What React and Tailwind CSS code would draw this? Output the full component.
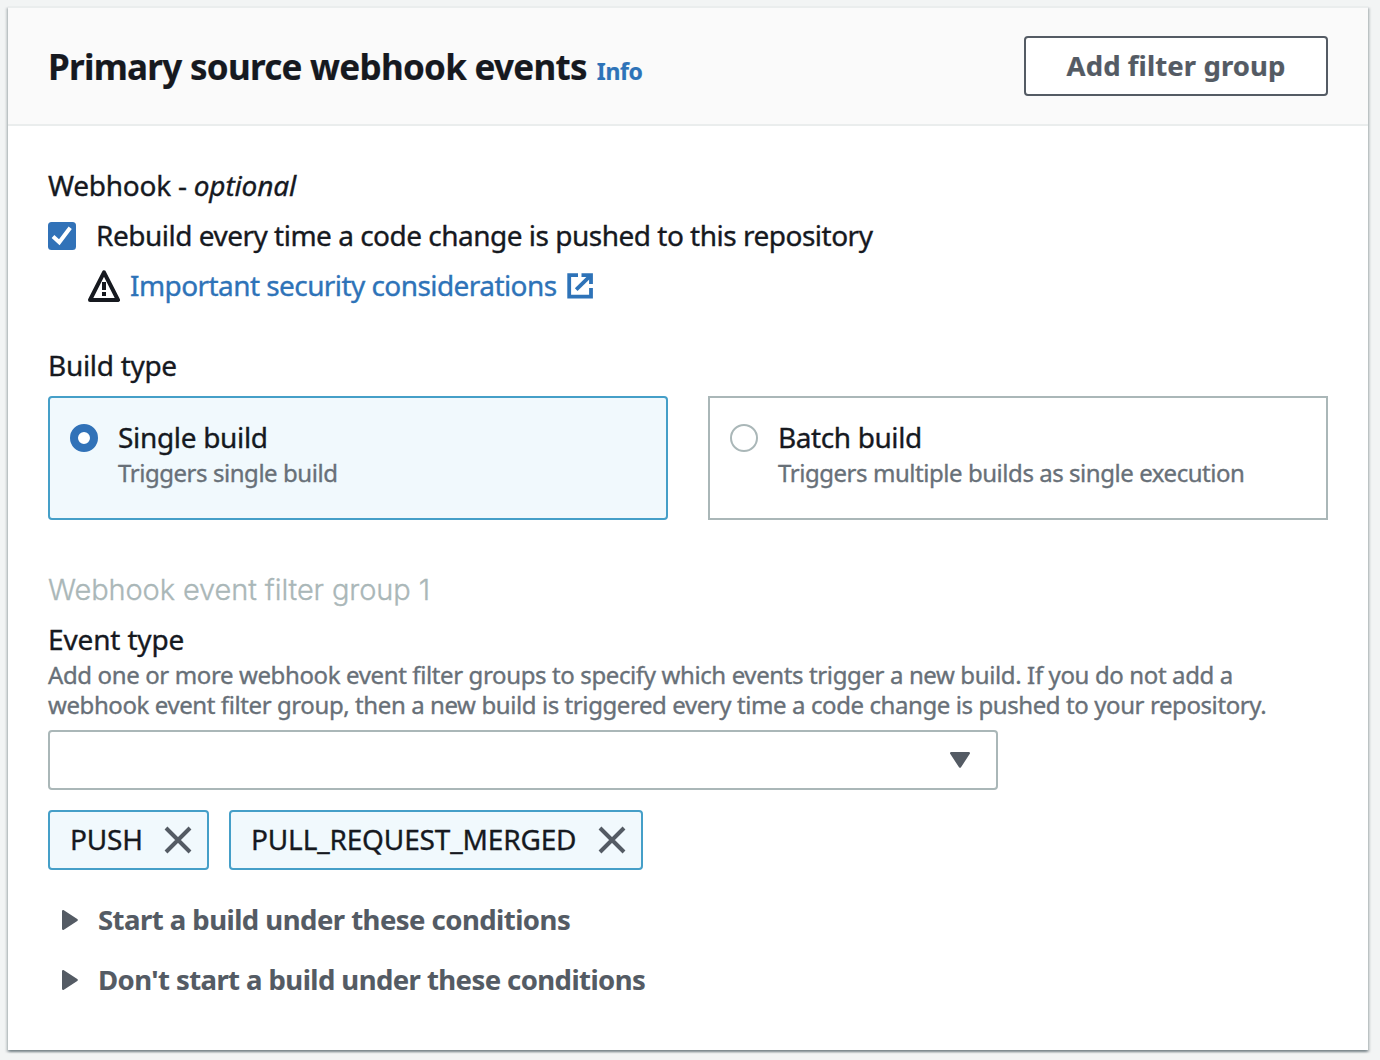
function Checkbox() {
  return (
    <svg className="size-7 shrink-0" viewBox="0 0 28 28">
      <rect width="28" height="28" rx="3.5" fill="#3172b8" />
      <path d="M5 14.5 L11.3 20.3 L22.2 5.8" fill="none" stroke="#fff" strokeWidth="4" />
    </svg>
  );
}

function WarningIcon() {
  return (
    <svg className="h-8 w-8 shrink-0" viewBox="0 0 32 32" fill="none" stroke="#16191f">
      <path d="M16 2.4 L30 30 H2 Z" strokeWidth="4" strokeLinejoin="round" />
      <path d="M16 12 V20 M16 22 V26" strokeWidth="4" />
    </svg>
  );
}

function ExternalIcon() {
  return (
    <svg className="h-[26px] w-[26px] shrink-0" viewBox="0 0 26 26" fill="none" stroke="#2e73b8" strokeWidth="3.8">
      <path d="M11 2.2 H2.2 V23.6 H24 V15" />
      <path d="M14.5 2.2 H24 V11" />
      <path d="M23.5 2.7 L9.2 16.6" />
    </svg>
  );
}

function CloseIcon() {
  return (
    <svg className="size-7 shrink-0" viewBox="0 0 28 28" fill="none" stroke="#545b64" strokeWidth="4">
      <path d="M2 2 L26 26 M26 2 L2 26" />
    </svg>
  );
}

function CaretDown() {
  return (
    <svg className="h-4 w-5" viewBox="0 0 20 16">
      <path d="M1.2 1.2 H18.8 L10 14.6 Z" fill="#545b64" stroke="#545b64" strokeWidth="2.4" strokeLinejoin="round" />
    </svg>
  );
}

function CaretRight() {
  return (
    <svg className="h-5 w-4" viewBox="0 0 16 20">
      <path d="M1.2 1.2 V18.8 L14.6 10 Z" fill="#545b64" stroke="#545b64" strokeWidth="2.4" strokeLinejoin="round" />
    </svg>
  );
}

function Radio({ checked }) {
  return checked ? (
    <span className="size-7 shrink-0 rounded-full border-8 border-[#3172b8] bg-white" />
  ) : (
    <span className="size-7 shrink-0 rounded-full border-2 border-[#aab7b8] bg-white" />
  );
}

function Tile({ checked, title, titleClass, description }) {
  return (
    <div
      className={
        checked
          ? "flex h-[124px] gap-5 rounded border-2 border-[#459fc8] bg-[#f1f9fd] px-5 pt-[19px]"
          : "flex h-[124px] gap-5 border-2 border-[#aab7b8] bg-white px-5 pt-[19px]"
      }
    >
      <div className="flex h-10 items-center pt-0.5">
        <Radio checked={checked} />
      </div>
      <div>
        <div className={titleClass}>{title}</div>
        <div className="mt-px text-[24px] leading-[30px] tracking-[-0.45px] whitespace-nowrap text-[#687078]">
          {description}
        </div>
      </div>
    </div>
  );
}

function Token({ children, className }) {
  return (
    <div
      className={`flex h-[60px] items-center justify-between rounded border-2 border-[#459fc8] bg-[#f1f9fd] pr-[15px] pl-5 ${className}`}
    >
      <span className="pb-[3px]">{children}</span>
      <CloseIcon />
    </div>
  );
}

function Expander({ children, className }) {
  return (
    <div className="flex h-10 items-center gap-5 pl-[14px]">
      <CaretRight />
      <span className={`text-[27.5px] leading-10 font-bold whitespace-nowrap text-[#545b64] ${className}`}>{children}</span>
    </div>
  );
}

export default function App() {
  return (
    <div className="h-[1060px] w-[1380px] overflow-hidden bg-[#f2f4f4] px-2 pt-1.5 pr-3 font-['Noto_Sans',sans-serif] text-[28px] leading-10 text-[#16191f] [-webkit-text-stroke:0.35px]">
      <div className="h-[1044px] border-t-2 border-[#eaeded] bg-white shadow-[0_2px_2px_0_rgba(0,28,36,0.3),2px_2px_2px_0_rgba(0,28,36,0.15),-2px_2px_2px_0_rgba(0,28,36,0.15)]">
        <header className="flex h-[118px] items-start justify-between border-b-2 border-[#eaeded] bg-[#fafafa] px-10 pt-7 [-webkit-text-stroke:0.2px]">
          <h2 className="flex items-baseline gap-[10px] pt-[9px] leading-[44px] font-bold whitespace-nowrap">
            <span className="text-[35px] tracking-[-0.72px]">Primary source webhook events</span>
            <a className="text-[23px] tracking-[-0.4px] text-[#2e73b8]">Info</a>
          </h2>
          <button className="flex h-[60px] w-[304px] items-center justify-center rounded border-2 border-[#545b64] bg-white text-[27.5px] font-bold tracking-[0.1px] text-[#545b64]">
            Add filter group
          </button>
        </header>

        <main className="px-10 pt-[39px]">
          <div className="whitespace-pre">
            <span className="tracking-[-0.25px]">Webhook - </span>
            <em className="tracking-[-0.15px]">optional</em>
          </div>
          <label className="mt-2.5 flex h-10 items-center gap-5">
            <span className="pt-0.5">
              <Checkbox />
            </span>
            <span className="tracking-[-0.5px] whitespace-nowrap">
              Rebuild every time a code change is pushed to this repository
            </span>
          </label>
          <div className="mt-2.5 flex h-10 items-center pl-10">
            <span className="pt-0.5">
              <WarningIcon />
            </span>
            <a className="ml-[10px] tracking-[-0.57px] whitespace-nowrap text-[#2e73b8]">Important security considerations</a>
            <span className="ml-[10px] pt-0.5">
              <ExternalIcon />
            </span>
          </div>

          <div className="mt-10 tracking-[-0.3px]">Build type</div>
          <div className="mt-[11px] grid grid-cols-2 gap-10">
            <Tile checked title="Single build" titleClass="tracking-[-0.32px]" description="Triggers single build" />
            <Tile title="Batch build" titleClass="tracking-[-0.4px]" description="Triggers multiple builds as single execution" />
          </div>

          <h3 className="mt-[50px] font-['Inter',sans-serif] text-[29px] font-light tracking-[-0.1px] text-[#aab7b8]">
            Webhook event filter group 1
          </h3>
          <div className="mt-[9px] tracking-[-0.15px]">Event type</div>
          <p className="mt-px text-[24px] leading-[30px] tracking-[-0.38px] whitespace-nowrap text-[#687078]">
            <span>
              Add one or more webhook event filter groups to specify which events trigger a new build. If you do not add a
            </span>
            <br />
            <span className="tracking-[-0.41px]">
              webhook event filter group, then a new build is triggered every time a code change is pushed to your repository.
            </span>
          </p>
          <div className="mt-2.5 flex h-[60px] w-[950px] items-center justify-end rounded border-2 border-[#aab7b8] bg-white pr-[26px]">
            <CaretDown />
          </div>
          <div className="mt-5 flex gap-5">
            <Token className="w-[161px] tracking-[-0.2px]">PUSH</Token>
            <Token className="w-[414px] tracking-[-0.15px]">PULL_REQUEST_MERGED</Token>
          </div>
          <div className="mt-[30px] flex flex-col gap-5 [-webkit-text-stroke:0.1px]">
            <Expander className="tracking-[-0.53px]">Start a build under these conditions</Expander>
            <Expander className="tracking-[-0.57px]">Don't start a build under these conditions</Expander>
          </div>
        </main>
      </div>
    </div>
  );
}
